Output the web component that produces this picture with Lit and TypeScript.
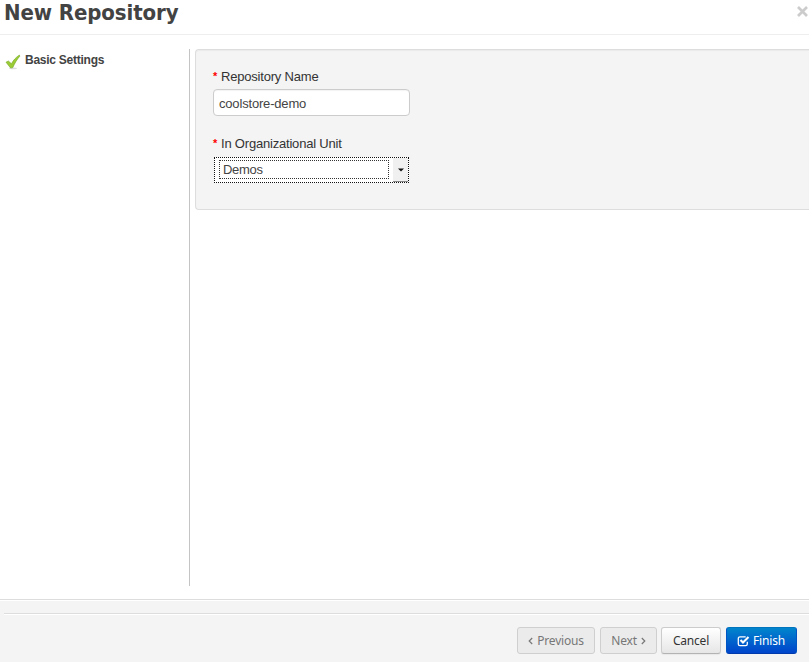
import { LitElement, html, css } from "lit";
import { customElement } from "lit/decorators.js";

@customElement("app-root")
export class AppRoot extends LitElement {
  static styles = css`
    * { box-sizing: border-box; }
    :host {
      display: flex; flex-direction: column; width: 100%; height: 100vh; overflow: hidden;
      background: #fff; color: #333; font: 13px/18px "Liberation Sans", Arial, sans-serif;
    }
    .header {
      display: flex; justify-content: space-between; height: 35px; flex: none;
      border-bottom: 1px solid #eee; padding-left: 4px;
    }
    .title {
      margin: 0; font: bold 22px/26px "DejaVu Sans Condensed", "DejaVu Sans", sans-serif;
      font-stretch: condensed; letter-spacing: -0.1px; color: #434343; white-space: nowrap;
    }
    .close { width: 13px; height: 13px; margin-top: 5px; flex: none; }
    .body { display: flex; flex: 1; padding-top: 14px; min-height: 0; }
    .steps {
      width: 190px; height: 537px; flex: none; border-right: 1px solid #c4c4c4;
      display: flex; align-items: flex-start; padding: 2px 0 0 5px;
    }
    .check { width: 16px; height: 16px; margin: 3px 4px 0 0; }
    .step { font-weight: bold; font-size: 12px; letter-spacing: -0.25px; color: #434343; }
    .well {
      flex: 1; height: 161px; margin-left: 5px; padding: 18px 17px; background: #f4f4f4;
      border: 1px solid #ddd; border-right: 0; border-radius: 4px 0 0 4px;
      box-shadow: inset 0 1px 1px rgba(0,0,0,.04);
    }
    .label { display: flex; height: 18px; margin-bottom: 3px; letter-spacing: -0.2px; }
    .star { color: #f00; width: 8px; font-size: 11px; line-height: 17px; font-weight: bold; }
    .input {
      width: 197px; height: 27px; border: 1px solid #ccc; border-radius: 4px; background: #fff;
      padding: 5px; color: #444; margin-bottom: 19px; letter-spacing: -0.18px;
      box-shadow: inset 0 1px 1px rgba(0,0,0,.05);
    }
    .select {
      width: 195px; height: 26px; border: 1px dotted #111; background: #fff; display: flex;
      margin: 4px 0 0 1px;
    }
    .value {
      width: 170px; height: 19px; flex: none; margin: 2px 4px 3px 4px; border: 1px dotted #333;
      padding-left: 3px; line-height: 17px; color: #444; letter-spacing: -0.3px;
    }
    .arrow {
      flex: 1; background: #f0f0f0; border-bottom: 1px solid #888;
      display: flex; align-items: center; justify-content: center;
    }
    .footer {
      height: 63px; flex: none; border-top: 1px solid #ddd; background: #f4f4f4;
      box-shadow: inset 0 1px 0 #fff; padding: 13px 0 0 4px;
    }
    .actions {
      border-top: 1px solid #ddd; box-shadow: inset 0 1px 0 #fff; padding: 13px 12px 0 0;
      display: flex; justify-content: flex-end; gap: 5px;
    }
    .btn {
      height: 27px; border: 1px solid #ccc; border-radius: 3px; display: flex; align-items: center;
      justify-content: center; font: 12px/18px "Noto Sans", sans-serif; letter-spacing: -0.2px;
      white-space: nowrap; gap: 3px;
    }
    .disabled { background: #ebebeb; color: #777; border-color: #cfcfcf; }
    .previous { width: 78px; gap: 4px; }
    .next { width: 57px; margin-right: -1px; gap: 4px; }
    .cancel {
      width: 60px; background: linear-gradient(#fff, #e6e6e6); color: #333;
      border-color: #ccc #ccc #b3b3b3; box-shadow: 0 1px 1px rgba(0,0,0,.05);
    }
    .finish {
      width: 71px; background: linear-gradient(#0085cc, #04c); color: #fff;
      border-color: #0074bd #0055c4 #003aab; gap: 3px; padding-right: 1px;
    }
  `;

  render() {
    return html`
      <div class="header">
        <h3 class="title">New Repository</h3>
        <svg class="close" viewBox="0 0 13 13"><path d="M2 2L11 11M11 2L2 11" stroke="#ccc" stroke-width="2.7"/></svg>
      </div>
      <div class="body">
        <div class="steps">
          <svg class="check" viewBox="0 0 16 16">
            <ellipse cx="8" cy="14.4" rx="4" ry=".8" fill="#ddd"/>
            <path d="M1 8.2L3.4 7L6.4 9.8C8.2 6.4 10.8 3.4 14.4 1L14.8 2.2C12 5.4 9.8 9 7.8 13.6L5.6 14Z" fill="#9bcb35" stroke="#74a821" stroke-width=".6"/>
          </svg>
          <span class="step">Basic Settings</span>
        </div>
        <div class="well">
          <div class="label"><span class="star">*</span><span>Repository Name</span></div>
          <div class="input">coolstore-demo</div>
          <div class="label"><span class="star">*</span><span>In Organizational Unit</span></div>
          <div class="select">
            <div class="value">Demos</div>
            <div class="arrow"><svg width="6" height="4" viewBox="0 0 6 4"><path d="M0 .5H6L3 3.6Z" fill="#111"/></svg></div>
          </div>
        </div>
      </div>
      <div class="footer">
        <div class="actions">
          <div class="btn disabled previous">
            <svg width="5" height="8" viewBox="0 0 5 8"><path d="M4.2 1L1.2 4L4.2 7" fill="none" stroke="#777" stroke-width="1.2"/></svg>
            <span>Previous</span>
          </div>
          <div class="btn disabled next">
            <span>Next</span>
            <svg width="5" height="8" viewBox="0 0 5 8"><path d="M.8 1L3.8 4L.8 7" fill="none" stroke="#777" stroke-width="1.2"/></svg>
          </div>
          <div class="btn cancel">Cancel</div>
          <div class="btn finish">
            <svg width="13" height="12" viewBox="0 0 12 12"><path d="M9.8 6.7V9A1.7 1.7 0 0 1 8.1 10.7H2.5A1.7 1.7 0 0 1 .8 9V3.5A1.7 1.7 0 0 1 2.5 1.8H8.2" fill="none" stroke="#fff" stroke-width="1.3"/><path d="M3 5L5.5 7.5L11 2" fill="none" stroke="#fff" stroke-width="2.1"/></svg>
            <span>Finish</span>
          </div>
        </div>
      </div>
    `;
  }
}
